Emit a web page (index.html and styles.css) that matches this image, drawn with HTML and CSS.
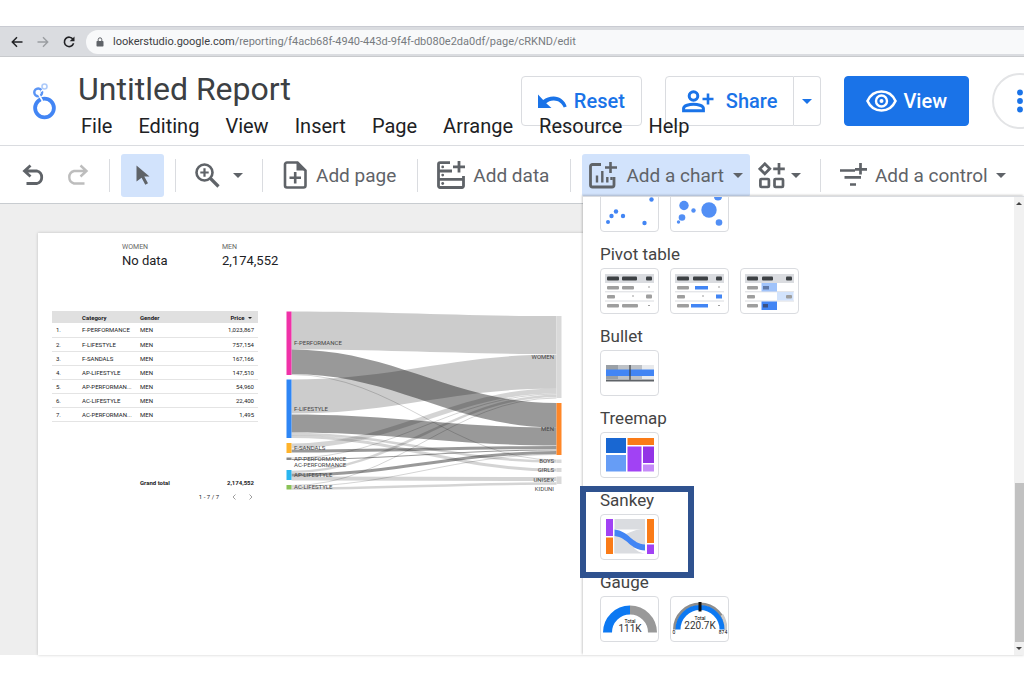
FILE: index.html
```html
<!DOCTYPE html>
<html lang="en">
<head>
    <meta charset="UTF-8">
    <title>Untitled Report</title>
    <link rel="stylesheet" href="styles.css">
</head>
<body>
<div class="browser-bar">
    <button class="nav-btn" aria-label="Back">
        <svg width="12" height="12" viewBox="0 0 12 12"><path d="M11.500 6H1.500M6 1.300L1.300 6 6 10.700" fill="none" stroke="#202124" stroke-width="1.500"/></svg>
    </button>
    <button class="nav-btn" aria-label="Forward">
        <svg width="12" height="12" viewBox="0 0 12 12"><path d="M.5 6h10M6 1.300L10.700 6 6 10.700" fill="none" stroke="#9a9da1" stroke-width="1.400"/></svg>
    </button>
    <button class="nav-btn" aria-label="Reload">
        <svg width="12" height="12" viewBox="0 0 12 12"><path d="M10 3.200A4.700 4.700 0 1 0 10.600 7.300" fill="none" stroke="#202124" stroke-width="1.600"/><path d="M11.500.5V5.300H6.700z" fill="#202124"/></svg>
    </button>
    <label class="address">
        <svg width="8" height="10" viewBox="0 0 8 10"><path d="M2.200 4.500V2.600a1.800 1.800 0 0 1 3.600 0V4.500" fill="none" stroke="#5f6368"/><rect x=".5" y="4" width="7" height="5.500" rx=".7" fill="#5f6368"/></svg>
        <span>lookerstudio.google.com</span><input type="text" aria-label="Address" value="/reporting/f4acb68f-4940-443d-9f4f-db080e2da0df/page/cRKND/edit">
    </label>
</div>

<header class="header">
    <div class="actions">
        <button class="btn">
            <svg width="29" height="15" viewBox="0 0 29 15"><path d="M0 .5V14H13.500L8.200 9.200C10 7.600 12.500 6.600 15.500 6.400 20 6.200 24.200 9 25.700 13.500L28.700 12.500C26.800 6.500 21.500 2.500 15.500 2.600 11.500 2.700 8 4 5.200 6z" fill="#1a73e8"/></svg>
            Reset
        </button>
        <div class="split">
            <button class="btn share">
                <svg width="32" height="23" viewBox="0 0 32 23"><g fill="none" stroke="#1a73e8" stroke-width="3"><circle cx="11.500" cy="6" r="4.300"/><path d="M1.600 20.800V18.500c0-3 6-4.200 9.900-4.200s9.900 1.200 9.900 4.200v2.300z"/><path d="M26 3.500v11M20.500 9h11" stroke-width="2.600"/></g></svg>
                Share
            </button>
            <button class="btn more" aria-label="Share options"><span class="caret"></span></button>
        </div>
        <button class="btn primary">
            <svg width="31" height="22" viewBox="0 0 31 22"><path d="M1.500 11C4.200 5 9.500 1.500 15.500 1.500S26.800 5 29.500 11C26.800 17 21.500 20.500 15.500 20.500S4.200 17 1.500 11z" fill="none" stroke="#fff" stroke-width="2.600"/><circle cx="15.500" cy="11" r="5.500" fill="none" stroke="#fff" stroke-width="2.400"/><circle cx="15.500" cy="11" r="2" fill="#fff"/></svg>
            View
        </button>
        <button class="round" aria-label="More options">
            <svg width="6" height="24" viewBox="0 0 6 24"><g fill="#1a73e8"><circle cx="3" cy="3.500" r="2.900"/><circle cx="3" cy="12" r="2.900"/><circle cx="3" cy="20.500" r="2.900"/></g></svg>
        </button>
    </div>
    <div class="doc">
        <svg class="logo" width="24" height="38" viewBox="0 0 24 38"><g fill="none"><circle cx="12.500" cy="26" r="9.400" stroke="#4285f4" stroke-width="3.800"/><circle cx="6.200" cy="10.300" r="3.900" stroke="#5b95f5" stroke-width="2.500"/><path d="M6.500 12l4 7M9 9.500l2.500-2.500" stroke="#fff" stroke-width="1.600"/><circle cx="12.500" cy="4.500" r="2.500" stroke="#aecbfa" stroke-width="1.600"/></g></svg>
        <div>
            <h1>Untitled Report</h1>
            <nav class="menu">
                <a href="#">File</a>
                <a href="#">Editing</a>
                <a href="#">View</a>
                <a href="#">Insert</a>
                <a href="#">Page</a>
                <a href="#">Arrange</a>
                <a href="#">Resource</a>
                <a href="#">Help</a>
            </nav>
        </div>
    </div>
</header>

<div class="toolbar">
    <button class="tool icon-only" aria-label="Undo">
        <svg width="24" height="22" viewBox="0 0 24 22"><path d="M8.500 1.500L2.500 7l6 5.500M2.500 7H15a6.500 6.500 0 0 1 0 12.500H4.500" fill="none" stroke="#5f6368" stroke-width="2.800"/></svg>
    </button>
    <button class="tool icon-only" aria-label="Redo">
        <svg width="24" height="22" viewBox="0 0 24 22"><path d="M15.500 1.500L21.500 7l-6 5.500M21.500 7H9a6.500 6.500 0 0 0 0 12.500h10.500" fill="none" stroke="#bdbdbd" stroke-width="2.400"/></svg>
    </button>
    <span class="sep"></span>
    <button class="tool icon-only active" aria-label="Select">
        <svg width="14" height="20" viewBox="0 0 14 20"><path d="M.5.500L13.500 11.500H8.300L12 18.300 9.300 19.700 5.600 12.700.5 16.500z" fill="#5f6368"/></svg>
    </button>
    <span class="sep"></span>
    <button class="tool zoom" aria-label="Zoom">
        <svg width="25" height="25" viewBox="0 0 25 25"><g fill="none" stroke="#5f6368"><circle cx="9.500" cy="9.500" r="8" stroke-width="2.600"/><path d="M15.500 15.500l8 8" stroke-width="3.200"/><path d="M9.500 5.300v8.400M5.300 9.500h8.400" stroke-width="2.200"/></g></svg>
        <span class="caret"></span>
    </button>
    <span class="sep"></span>
    <button class="tool labelled">
        <svg width="26" height="28" viewBox="0 0 24 28"><path d="M4 1.500h10.500L22.500 9.500V24.500a2 2 0 0 1-2 2H4a2 2 0 0 1-2-2v-21a2 2 0 0 1 2-2z" fill="none" stroke="#5f6368" stroke-width="2.600"/><path d="M13.500 1.500V9.500H23z" fill="#5f6368"/><path d="M12.200 11v11.500M6.500 16.700H18" stroke="#5f6368" stroke-width="2.600"/></svg>
        Add page
    </button>
    <span class="sep"></span>
    <button class="tool labelled">
        <svg width="28" height="28" viewBox="0 0 28 28"><g fill="none" stroke="#5f6368" stroke-width="2.800"><path d="M13 1.700H3a1.500 1.500 0 0 0-1.500 1.500V25a1.500 1.500 0 0 0 1.500 1.500H25a1.500 1.500 0 0 0 1.500-1.500V15M1.500 10H15M1.500 18.300H26.500M22 0v11.500M16 5.800h12"/></g><g fill="#5f6368"><circle cx="5.700" cy="5.900" r="1.400"/><circle cx="5.700" cy="14.100" r="1.400"/><circle cx="5.700" cy="22.500" r="1.400"/></g></svg>
        Add data
    </button>
    <span class="sep"></span>
    <button class="tool chart active">
        <svg width="28" height="27" viewBox="0 0 28 27"><g fill="none" stroke="#5f6368"><path d="M12 2.500H3.500a2 2 0 0 0-2 2V23a2 2 0 0 0 2 2H23a2 2 0 0 0 2-2V15" stroke-width="2.800"/><path d="M8 13.500v7M13.300 9v11.500M18.300 15v5.500M22.500 15v3" stroke-width="2.400"/><path d="M21.500 0v11M16 5.500h12" stroke-width="2.600"/></g></svg>
        Add a chart
        <span class="caret"></span>
    </button>
    <button class="tool shapes" aria-label="Community visualizations">
        <svg width="27" height="27" viewBox="0 0 27 27"><g fill="none" stroke="#5f6368" stroke-width="2.700"><path d="M6.800 1.800L11.800 6.800 6.800 11.800 1.800 6.800z"/><rect x="2.400" y="17" width="8.500" height="8" rx="1"/><rect x="16.500" y="17" width="8.500" height="8" rx="1"/><path d="M21 1v11.500M15.200 6.800h11.600"/></g></svg>
        <span class="caret"></span>
    </button>
    <span class="sep"></span>
    <button class="tool">
        <svg width="27" height="24" viewBox="0 0 27 24"><path d="M0 7.500h15M20.500 0v11.500M15 6.300h12M4.500 14.300H21M10 21.500h6" fill="none" stroke="#5f6368" stroke-width="2.700"/></svg>
        Add a control
        <span class="caret"></span>
    </button>
</div>

<main class="workspace">
    <div class="sheet">
        <div class="scorecards">
            <div class="score"><span>WOMEN</span><b>No data</b></div>
            <div class="score"><span>MEN</span><b>2,174,552</b></div>
        </div>
        <div class="report">
            <div class="table-box">
                <table>
                    <thead>
                        <tr><th class="num"></th><th class="cat">Category</th><th>Gender</th><th class="price">Price <i></i></th></tr>
                    </thead>
                    <tbody>
                        <tr><td>1.</td><td>F-PERFORMANCE</td><td>MEN</td><td class="price">1,023,867</td></tr>
                        <tr><td>2.</td><td>F-LIFESTYLE</td><td>MEN</td><td class="price">757,154</td></tr>
                        <tr><td>3.</td><td>F-SANDALS</td><td>MEN</td><td class="price">167,166</td></tr>
                        <tr><td>4.</td><td>AP-LIFESTYLE</td><td>MEN</td><td class="price">147,510</td></tr>
                        <tr><td>5.</td><td>AP-PERFORMAN...</td><td>MEN</td><td class="price">54,960</td></tr>
                        <tr><td>6.</td><td>AC-LIFESTYLE</td><td>MEN</td><td class="price">22,400</td></tr>
                        <tr><td>7.</td><td>AC-PERFORMAN...</td><td>MEN</td><td class="price">1,495</td></tr>
                    </tbody>
                    <tfoot>
                        <tr><td></td><td></td><td>Grand total</td><td class="price">2,174,552</td></tr>
                    </tfoot>
                </table>
                <div class="pager">
                    <span>1 - 7 / 7</span>
                    <button aria-label="Previous page"><svg width="4" height="6" viewBox="0 0 4 6"><path d="M3.500.5L1 3l2.500 2.500" fill="none" stroke="#888" stroke-width=".8"/></svg></button>
                    <button aria-label="Next page"><svg width="4" height="6" viewBox="0 0 4 6"><path d="M.5.500L3 3 .5 5.500" fill="none" stroke="#888" stroke-width=".8"/></svg></button>
                </div>
            </div>
            <svg class="sankey" width="276" height="184" viewBox="286 311 276 184">
                <!-- wide flows -->
                <g fill="#000" fill-opacity=".2">
                    <path d="M291.500 311.500C395 311.500 453 316 556.500 316V354C453 354 395 349.500 291.500 349.500z"/>
                    <path d="M291.500 379.500C395 379.500 453 354.500 556.500 354.500V388.500C453 388.500 395 413.500 291.500 413.500z"/>
                </g>
                <g fill="#000" fill-opacity=".4">
                    <path d="M291.500 349.500C395 349.500 453 403 556.500 403V427.500C453 427.500 395 374 291.500 374z"/>
                    <path d="M291.500 414.500C395 414.500 453 427.500 556.500 427.500V445.500C453 445.500 395 432.500 291.500 432.500z"/>
                </g>
                <!-- thin flows -->
                <g fill="none" stroke="#000" stroke-opacity=".17">
                    <path d="M291.500 374.500C395 374.500 453 460 556.500 460" stroke-width="1"/>
                    <path d="M291.500 434C395 434 453 461.500 556.500 461.500" stroke-width="2.500"/>
                    <path d="M291.500 436.500C395 436.500 453 470 556.500 470" stroke-width="3"/>
                    <path d="M291.500 446C395 446 453 391 556.500 391" stroke-width="5"/>
                    <path d="M291.500 458C395 458 453 394 556.500 394" stroke-width="1"/>
                    <path d="M291.500 472C395 472 453 396 556.500 396" stroke-width="2.500"/>
                    <path d="M291.500 485.500C395 485.500 453 398 556.500 398" stroke-width="1"/>
                    <path d="M291.500 478.500C395 478.500 453 479 556.500 479" stroke-width="4"/>
                    <path d="M291.500 488.500C395 488.500 453 483.500 556.500 483.500" stroke-width="2.500"/>
                    <path d="M291.500 486.500C395 486.500 453 454.500 556.500 454.500" stroke-width="1"/>
                </g>
                <g fill="none" stroke="#000" stroke-opacity=".4">
                    <path d="M291.500 451C395 451 453 447.500 556.500 447.500" stroke-width="3"/>
                    <path d="M291.500 459.500C395 459.500 453 450 556.500 450" stroke-width="1"/>
                    <path d="M291.500 475C395 475 453 452.500 556.500 452.500" stroke-width="3"/>
                </g>
                <!-- nodes -->
                <rect x="286.500" y="311.500" width="5" height="63.500" fill="#f032a8"/>
                <rect x="286.500" y="379.500" width="5" height="58.500" fill="#2e86f5"/>
                <rect x="286.500" y="443" width="5" height="10" fill="#ffb32b"/>
                <rect x="286.500" y="457.500" width="5" height="2.500" fill="#8a8a8a"/>
                <rect x="286.500" y="470" width="5" height="10" fill="#29b6f0"/>
                <rect x="286.500" y="485" width="5" height="4.500" fill="#8ac257"/>
                <rect x="556.500" y="316" width="5" height="82" fill="#d9d9d9"/>
                <rect x="556.500" y="403" width="5" height="52" fill="#ff8728"/>
                <rect x="556.500" y="459.500" width="5" height="3.500" fill="#d9d9d9"/>
                <rect x="556.500" y="468" width="5" height="4" fill="#d9d9d9"/>
                <rect x="556.500" y="476.500" width="5" height="7.500" fill="#d9d9d9"/>
                <g class="node-label">
                    <text x="294" y="345">F-PERFORMANCE</text>
                    <text x="294" y="411">F-LIFESTYLE</text>
                    <text x="294" y="450">F-SANDALS</text>
                    <text x="294" y="461">AP-PERFORMANCE</text>
                    <text x="294" y="467">AC-PERFORMANCE</text>
                    <text x="294" y="477">AP-LIFESTYLE</text>
                    <text x="294" y="489">AC-LIFESTYLE</text>
                </g>
                <g class="node-label" text-anchor="end">
                    <text x="554" y="359">WOMEN</text>
                    <text x="554" y="431">MEN</text>
                    <text x="554" y="463">BOYS</text>
                    <text x="554" y="472">GIRLS</text>
                    <text x="554" y="482">UNISEX</text>
                    <text x="554" y="491">KIDUNI</text>
                </g>
            </svg>
        </div>
    </div>

    <aside class="chart-menu">
        <div class="chart-list">
            <div class="tiles">
                <button class="tile" aria-label="Scatter chart">
                    <svg width="57" height="44" viewBox="0 0 57 44"><g fill="#4285f4"><circle cx="7" cy="35" r="2"/><circle cx="10.500" cy="29" r="2.200"/><circle cx="15" cy="24.500" r="2.200"/><circle cx="22" cy="29" r="2.200"/><circle cx="35" cy="8" r="2"/><circle cx="50.500" cy="12.500" r="2.200"/><circle cx="43.500" cy="36" r="2.200"/></g></svg>
                </button>
                <button class="tile" aria-label="Bubble chart">
                    <svg width="57" height="44" viewBox="0 0 57 44"><g fill="#528ff5"><circle cx="13" cy="18.500" r="4.700"/><circle cx="22.500" cy="23.500" r="2.200"/><circle cx="11" cy="30.500" r="3.300"/><circle cx="7.500" cy="35" r="1.700"/><circle cx="38" cy="23" r="7.700"/><circle cx="47" cy="9.500" r="4"/><circle cx="48" cy="35.500" r="3.300"/></g></svg>
                </button>
            </div>
            <h2>Pivot table</h2>
            <div class="tiles">
                <button class="tile" aria-label="Pivot table">
                    <svg width="57" height="44" viewBox="0 0 57 44"><path d="M4 5h49v9H4z" fill="#dadce0"/><path d="M4 22.800h49M4 32h49" stroke="#dadce0"/><g fill="#3c4043"><rect x="6" y="7.500" width="12" height="4" rx="1"/><rect x="21" y="7.500" width="15" height="4" rx="1"/><rect x="45" y="7.500" width="6" height="4" rx="1"/></g><g fill="#9e9e9e"><rect x="6" y="17" width="12" height="3.500" rx="1"/><rect x="21" y="17" width="12" height="3.500" rx="1"/><rect x="47" y="17.500" width="2" height="1"/><rect x="6" y="26" width="8" height="3.500" rx="1"/><rect x="31" y="26.500" width="2" height="1"/><rect x="45" y="25.500" width="6" height="4" rx="1"/><rect x="6" y="35" width="12" height="3.500" rx="1"/><rect x="21" y="35" width="16" height="3.500" rx="1"/><rect x="47" y="36" width="2" height="1"/></g></svg>
                </button>
                <button class="tile" aria-label="Pivot table with bars">
                    <svg width="57" height="44" viewBox="0 0 57 44"><path d="M4 5h49v9H4z" fill="#dadce0"/><path d="M4 22.800h49M4 32h49" stroke="#dadce0"/><g fill="#3c4043"><rect x="6" y="7.500" width="12" height="4" rx="1"/><rect x="22" y="7.500" width="15" height="4" rx="1"/><rect x="45" y="7.500" width="6" height="4" rx="1"/></g><g fill="#9e9e9e"><rect x="6" y="17" width="12" height="3.500" rx="1"/><rect x="47" y="17.500" width="2" height="1"/><rect x="6" y="26" width="8" height="3.500" rx="1"/><rect x="31" y="26.500" width="2" height="1"/><rect x="6" y="35" width="12" height="3.500" rx="1"/><rect x="47" y="36" width="2" height="1"/></g><path d="M24 17h13v3.500H24zM45 25.500h6v4h-6zM20 35h17v3.500H20z" fill="#4285f4"/></svg>
                </button>
                <button class="tile" aria-label="Pivot table with heatmap">
                    <svg width="57" height="44" viewBox="0 0 57 44"><path d="M4 5h49v9H4z" fill="#dadce0"/><path d="M4 22.800h49M4 32h49" stroke="#dadce0"/><path d="M20.500 14h15.500v8.500H20.500z" fill="#a0c3fa"/><path d="M36 23h16.500v8.500H36z" fill="#d2e3fc"/><path d="M20.500 32.500h15.500V41H20.500z" fill="#4285f4"/><g fill="#3c4043"><rect x="6" y="7.500" width="11" height="4" rx="1"/><rect x="21" y="7.500" width="11" height="4" rx="1"/><rect x="45" y="7.500" width="6" height="4" rx="1"/></g><g fill="#9e9e9e"><rect x="6" y="17" width="11" height="3.500" rx="1"/><rect x="6" y="26" width="8" height="3.500" rx="1"/><rect x="45" y="26" width="6" height="3.500" rx="1"/><rect x="6" y="35" width="11" height="3.500" rx="1"/></g><path d="M22 17h6v3.500h-6z" fill="#6079a8"/><path d="M22 35h5v3.500h-5z" fill="#3c5284"/></svg>
                </button>
            </div>
            <h2>Bullet</h2>
            <div class="tiles">
                <button class="tile" aria-label="Bullet chart">
                    <svg width="57" height="44" viewBox="0 0 57 44"><path d="M5 14h12v14H5z" fill="#9aa0a6"/><path d="M17 14h24v14H17z" fill="#bdc1c6"/><path d="M41 14h12v14H41z" fill="#e8eaed"/><path d="M5 18.500h48V25H5z" fill="#4285f4"/><path d="M29 14v15.500" stroke="#3c4043" stroke-width="1.200"/><path d="M5 29.500h48" stroke="#5f6368" stroke-width="1.800"/></svg>
                </button>
            </div>
            <h2>Treemap</h2>
            <div class="tiles">
                <button class="tile" aria-label="Treemap">
                    <svg width="57" height="44" viewBox="0 0 57 44"><path d="M5 5h20v15H5z" fill="#1967d2"/><path d="M5 22h20v16.500H5z" fill="#669df6"/><path d="M26.500 5H53v7H26.500z" fill="#fa7b17"/><path d="M26.500 13.500H40.500v25h-14z" fill="#a142f4"/><path d="M42 13.500H53v16.500H42z" fill="#9334e6"/><path d="M42 31.500H53v7H42z" fill="#c58af9"/></svg>
                </button>
            </div>
            <h2>Sankey</h2>
            <div class="tiles">
                <button class="tile" aria-label="Sankey chart">
                    <svg width="57" height="44" viewBox="0 0 57 44"><path d="M13.500 4H44v10.500H13.500z" fill="#dadce0"/><path d="M13.500 21C27 21 30 14 44 14V31C30 31 27 38 13.500 38z" fill="#dadce0"/><path d="M13.500 19C30 22 30 37 44 38.500H13.500z" fill="#dadce0"/><path d="M13.500 14.500C28 16 31 29 44 29.500V35.500C29 35 27 22.500 13.500 21z" fill="#4285f4"/><path d="M5 4h7v17H5zM46 29.500h7V39h-7z" fill="#a142f4"/><path d="M5 22.500h7V39H5zM46 4h7v24h-7z" fill="#fa7b17"/></svg>
                </button>
            </div>
            <h2>Gauge</h2>
            <div class="tiles">
                <button class="tile" aria-label="Gauge">
                    <svg width="57" height="44" viewBox="0 0 57 44"><g fill="none" stroke-width="9"><path d="M6.500 35.500A22.500 22.500 0 0 1 29 13" stroke="#0d79f2"/><path d="M29 13A22.500 22.500 0 0 1 51.500 35.500" stroke="#999"/></g><text class="gauge-name" x="29" y="26">Total</text><text class="gauge-value" x="29" y="35">111K</text></svg>
                </button>
                <button class="tile" aria-label="Gauge with range">
                    <svg width="57" height="44" viewBox="0 0 57 44"><g fill="none"><path d="M3.500 32.500A25.500 25.500 0 0 1 54.500 32.500" stroke="#8d8d8d" stroke-width="3"/><path d="M51 18A25.500 25.500 0 0 1 54.500 32.500" stroke="#ccc" stroke-width="3"/><path d="M7 32.500A22 22 0 0 1 51 32.500" stroke="#0d79f2" stroke-width="5"/><path d="M29 5v9.500" stroke="#111" stroke-width="3"/></g><text class="gauge-name" x="29" y="23">Total</text><text class="gauge-value" x="29" y="32">220.7K</text><text class="gauge-name" x="3" y="37">0</text><text class="gauge-name" x="52" y="37">874</text></svg>
                </button>
            </div>
        </div>
        <div class="scrollbar"><span class="up"></span><span class="thumb"></span><span class="down"></span></div>
        <div class="marker"></div>
    </aside>
</main>
</body>
</html>
```
FILE: styles.css
```css
*{
    margin: 0;
    padding: 0;
    box-sizing: border-box;
}
body{
    display: flex;
    flex-direction: column;
    min-height: 100vh;
    padding: 26px 0 28px;
    background: #fff;
    font-family: Roboto, "Liberation Sans", sans-serif;
    color: #202124;
    overflow-x: hidden;
}
button{
    font: inherit;
    color: inherit;
    border: 0;
    background: none;
    cursor: pointer;
}
svg{
    display: block;
    flex: none;
}

/* browser bar */
.browser-bar{
    display: flex;
    align-items: center;
    height: 31px;
    padding-left: 4px;
    background: #dadce0;
    border-top: 1px solid #c9cbd2;
    border-bottom: 1px solid #c8cacd;
}
.nav-btn{
    width: 26px;
    padding: 0 7px;
}
.address{
    display: flex;
    flex: 1;
    align-items: center;
    height: 24px;
    margin-left: 4px;
    padding-left: 10px;
    border-radius: 12px 0 0 12px;
    background: #f8f9fa;
    font-size: 11px;
    color: #3c4043;
}
.address svg{
    margin-right: 9px;
}
.address input{
    flex: 1;
    border: 0;
    background: none;
    font: inherit;
    color: #777b80;
}

/* header, the menu runs over the buttons */
.header{
    display: grid;
    padding-bottom: 7px;
    border-bottom: 1px solid #dadce0;
    overflow: hidden;
}
.doc, .actions{
    grid-area: 1 / 1;
}
.doc{
    display: flex;
    gap: 22px;
    padding: 15px 0 0 32px;
    pointer-events: none;
}
.logo{
    margin-top: 10px;
}
h1{
    font-size: 32px;
    font-weight: 400;
    line-height: 34px;
    color: #3c4043;
}
.menu{
    display: flex;
    gap: 26px;
    margin-top: 8px;
    padding-left: 3px;
    pointer-events: auto;
}
.menu a{
    color: #202124;
    font-size: 20px;
    line-height: 24px;
    text-decoration: none;
}
.actions{
    display: flex;
    align-items: flex-start;
    justify-content: flex-end;
    gap: 23px;
    padding-top: 19px;
    margin-right: -24px;
}
.btn{
    display: flex;
    align-items: center;
    gap: 7px;
    height: 50px;
    padding: 0 16px;
    border: 1px solid #dadce0;
    border-radius: 4px;
    font-size: 20px;
    font-weight: 500;
    color: #1a73e8;
}
.split{
    display: flex;
}
.share{
    gap: 12px;
    border-radius: 4px 0 0 4px;
}
.more{
    padding: 0 8px;
    border-left: 0;
    border-radius: 0 4px 4px 0;
}
.primary{
    gap: 6px;
    padding: 0 21px;
    background: #1a73e8;
    border-color: #1a73e8;
    color: #fff;
}
.round{
    display: flex;
    align-items: center;
    justify-content: center;
    width: 56px;
    height: 56px;
    margin-top: -3px;
    border: 2px solid #e3e4e6;
    border-radius: 50%;
}
.caret{
    border: 5px solid transparent;
    border-top-color: currentColor;
    border-bottom: 0;
}

/* toolbar */
.toolbar{
    display: flex;
    align-items: center;
    height: 58px;
    padding: 1px 0 0 12px;
    border-bottom: 1px solid #c8ccd0;
    overflow: hidden;
}
.tool{
    display: flex;
    flex: none;
    align-items: center;
    gap: 8px;
    height: 43px;
    padding: 0 8px;
    border-radius: 3px;
    font-size: 19px;
    color: #5f6368;
    white-space: nowrap;
}
.icon-only{
    justify-content: center;
    width: 43px;
    padding: 0;
}
.zoom{
    gap: 13px;
}
.labelled{
    padding-right: 10px;
}
.active{
    background: #d2e3fc;
}
.chart{
    gap: 9px;
    padding: 0 7px;
}
.shapes{
    gap: 6px;
}
.sep{
    flex: none;
    width: 1px;
    height: 33px;
    margin: 0 11px;
    background: #dadce0;
}

/* report */
.workspace{
    position: relative;
    display: flex;
    flex: 1;
    padding: 29px 0 0 38px;
    background: #eee;
}
.sheet{
    flex: 1;
    padding: 10px 14px 0;
    background: #fff;
    box-shadow: 0 0 3px rgba(0,0,0,0.2);
}
.scorecards{
    display: flex;
    padding-left: 70px;
}
.score{
    width: 100px;
}
.score span, .score b{
    display: block;
    font-weight: 400;
}
.score span{
    font-size: 7px;
    line-height: 9px;
    color: #666;
}
.score b{
    font-size: 13px;
    line-height: 17px;
}
.report{
    display: flex;
    gap: 28px;
    margin-top: 42px;
}
.table-box{
    width: 206px;
}
table{
    width: 100%;
    border-collapse: collapse;
    table-layout: fixed;
    font-size: 6px;
    text-align: left;
    white-space: nowrap;
}
th{
    height: 12px;
    background: #e0e0e0;
    font-weight: 700;
}
td{
    height: 14px;
    border-bottom: 1px solid #e4e4e4;
}
th:first-child, td:first-child{
    padding-left: 4px;
}
.num{
    width: 30px;
}
.cat{
    width: 58px;
}
.price{
    padding-right: 4px;
    text-align: right;
}
i{
    display: inline-block;
    margin: 0 2px 1px;
    border: 2px solid transparent;
    border-top-color: #222;
    border-bottom: 0;
}
tfoot td{
    height: 65px;
    border: 0;
    font-weight: 700;
    vertical-align: bottom;
}
.pager{
    display: flex;
    align-items: center;
    justify-content: flex-end;
    gap: 13px;
    margin-top: 7px;
    padding-right: 5px;
    font-size: 6px;
}
.node-label{
    font-size: 6px;
    fill: #444;
}

/* chart picker */
.chart-menu{
    position: absolute;
    top: -8px;
    right: 0;
    bottom: 0;
    left: 583px;
    display: flex;
    background: #fff;
    border-top: 1px solid #dadce0;
    box-shadow: -1px -1px 2px rgba(0,0,0,0.2);
}
.chart-list{
    display: flex;
    flex: 1;
    flex-direction: column;
    justify-content: flex-end;
    height: 459px;
    padding: 0 0 14px 17px;
    overflow: hidden;
}
h2{
    font-size: 17px;
    font-weight: 400;
    line-height: 20px;
    padding: 12px 0 4px;
    color: #444;
}
.tiles{
    display: flex;
    gap: 11px;
}
.tile{
    width: 59px;
    height: 46px;
    border: 1px solid #dadce0;
    border-radius: 4px;
}
.gauge-name{
    font-size: 5px;
    text-anchor: middle;
}
.gauge-value{
    font-size: 10px;
    text-anchor: middle;
    fill: #333;
}
.scrollbar{
    display: flex;
    flex-direction: column;
    align-items: center;
    width: 10px;
    padding: 5px 0;
    background: #f1f1f1;
}
.up, .down{
    border: 3px solid transparent;
}
.up{
    border-top: 0;
    border-bottom-color: #444;
    margin-bottom: auto;
}
.down{
    border-bottom: 0;
    border-top-color: #444;
}
.thumb{
    width: 9px;
    height: 159px;
    margin-bottom: 5px;
    background: #c1c1c1;
}
.marker{
    position: absolute;
    top: 289px;
    left: -3px;
    width: 114px;
    height: 92px;
    border: 6px solid #2f528f;
}
```
